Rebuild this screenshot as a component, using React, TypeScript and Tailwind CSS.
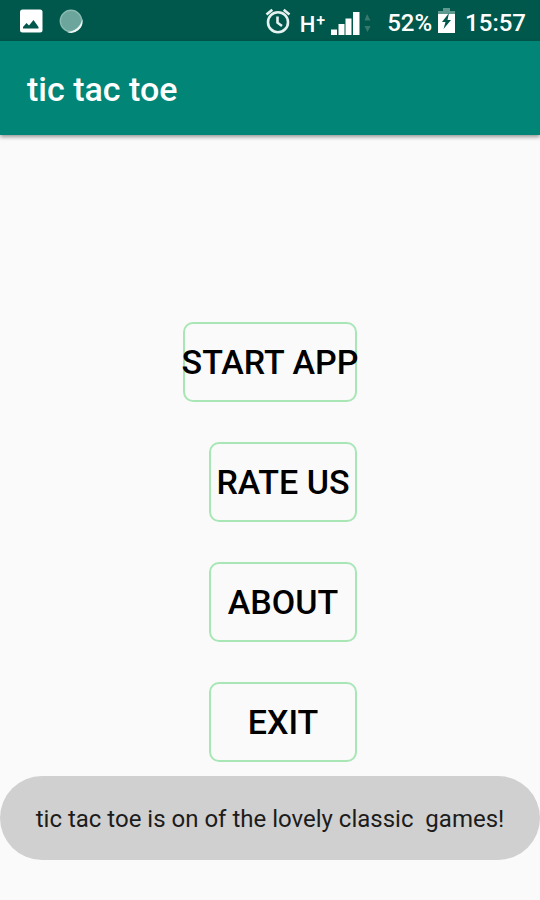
import { useState } from "react";
import { clsx } from "clsx";

const MENU_ITEMS = [
  { label: "START APP", wide: true },
  { label: "RATE US", wide: false },
  { label: "ABOUT", wide: false },
  { label: "EXIT", wide: false },
];

function PictureIcon() {
  return (
    <svg className="w-6 h-6" viewBox="0 0 24 24" aria-hidden="true">
      <rect x="1" y="0.5" width="22.5" height="23" rx="2.5" fill="#fff" />
      <path d="M4 19.5V18l3.5-4 2.5 2.5 4.5-5.5 5 7v1.5z" fill="#00574b" />
    </svg>
  );
}

function SyncCircleIcon() {
  return (
    <svg className="w-6 h-6" viewBox="0 0 24 24" aria-hidden="true">
      <circle cx="12" cy="12" r="10.5" fill="#6ba59b" />
      <circle cx="12" cy="12" r="10.7" fill="none" stroke="#8bbab2" strokeWidth="1.4" />
      <path d="M23.3 10A11.5 11.5 0 0 1 8 23.1 16 16 0 0 0 23.3 10z" fill="#eef6f5" />
    </svg>
  );
}

function AlarmIcon() {
  return (
    <svg
      className="w-7 h-7"
      viewBox="0 0 28 28"
      fill="none"
      stroke="#e6f2f0"
      strokeWidth="2.6"
      aria-hidden="true"
    >
      <circle cx="14" cy="15.2" r="10" />
      <path d="M13.5 9.5v6.2l4.5 3.3" />
      <path d="M2.5 7.5 8.3 2.7M25.5 7.5l-5.8-4.8" />
    </svg>
  );
}

function SignalIcon() {
  return (
    <svg className="w-10 h-6" viewBox="0 0 40 24" aria-hidden="true">
      <path
        d="M0 18.5h6V24H0zM7.5 13h6v11h-6zM14.5 7.5h6V24h-6zM22 1h6.5v23H22z"
        fill="#fff"
      />
      <path d="M33.5 9.5 36 3l3.5 6.5zM33.5 15l3 6 3-6z" fill="#38796f" />
    </svg>
  );
}

function BatteryIcon() {
  return (
    <svg className="w-[17px] h-[25px]" viewBox="0 0 17 25" aria-hidden="true">
      <path d="M5 0h7v3h5v5H0V3h5z" fill="#5f998f" />
      <path d="M0 6h17v19H0z" fill="#fff" />
      <path d="M11 5 4 14h3.5L5.5 21 13 12H9.500z" fill="#00574b" />
    </svg>
  );
}

function StatusBar() {
  return (
    <div className="flex items-center justify-between h-[41px] pl-[19px] pr-[14px] bg-[#00574b] text-white">
      <div className="flex items-center gap-4">
        <PictureIcon />
        <SyncCircleIcon />
      </div>
      <div className="flex items-center text-2xl font-medium">
        <AlarmIcon />
        <div className="flex items-center pl-2 pt-1">
          <span className="flex items-start gap-px pr-1.5 text-[22px] leading-6 pt-1">
            H<span className="text-base leading-4">+</span>
          </span>
          <SignalIcon />
        </div>
        <span className="pl-4 pt-1">52%</span>
        <div className="pl-1.5 pr-2.5">
          <BatteryIcon />
        </div>
        <span className="pt-1">15:57</span>
      </div>
    </div>
  );
}

export default function App() {
  const [toast, setToast] = useState("tic tac toe is on of the lovely classic  games!");

  return (
    <div className="min-h-screen flex flex-col bg-[#fafafa] font-['Roboto',sans-serif]">
      <StatusBar />
      <header className="flex items-center h-[94px] px-[27px] pt-0.5 bg-[#008577] shadow-[0_2px_4px_rgba(0,0,0,0.4)]">
        <h1 className="text-[34px] font-medium text-white">tic tac toe</h1>
      </header>

      <main className="flex flex-col items-center pt-[187px] pb-32">
        <nav className="flex flex-col items-end gap-10">
          {MENU_ITEMS.map((item) => (
            <button
              key={item.label}
              onClick={() => setToast("")}
              className={clsx(
                "flex items-center justify-center h-20 border-2 border-[#a9e6b6] rounded-[10px] cursor-pointer",
                "text-[34px] font-medium text-black whitespace-nowrap",
                item.wide ? "w-[174px]" : "w-[148px]",
              )}
            >
              {item.label}
            </button>
          ))}
        </nav>
      </main>

      {toast && (
        <div
          role="status"
          className="fixed inset-x-0 bottom-10 flex items-center justify-center h-[84px] pt-0.5 rounded-full bg-[#d0d0d0] text-2xl text-[#1c1c1c] whitespace-pre"
        >
          {toast}
        </div>
      )}
    </div>
  );
}
